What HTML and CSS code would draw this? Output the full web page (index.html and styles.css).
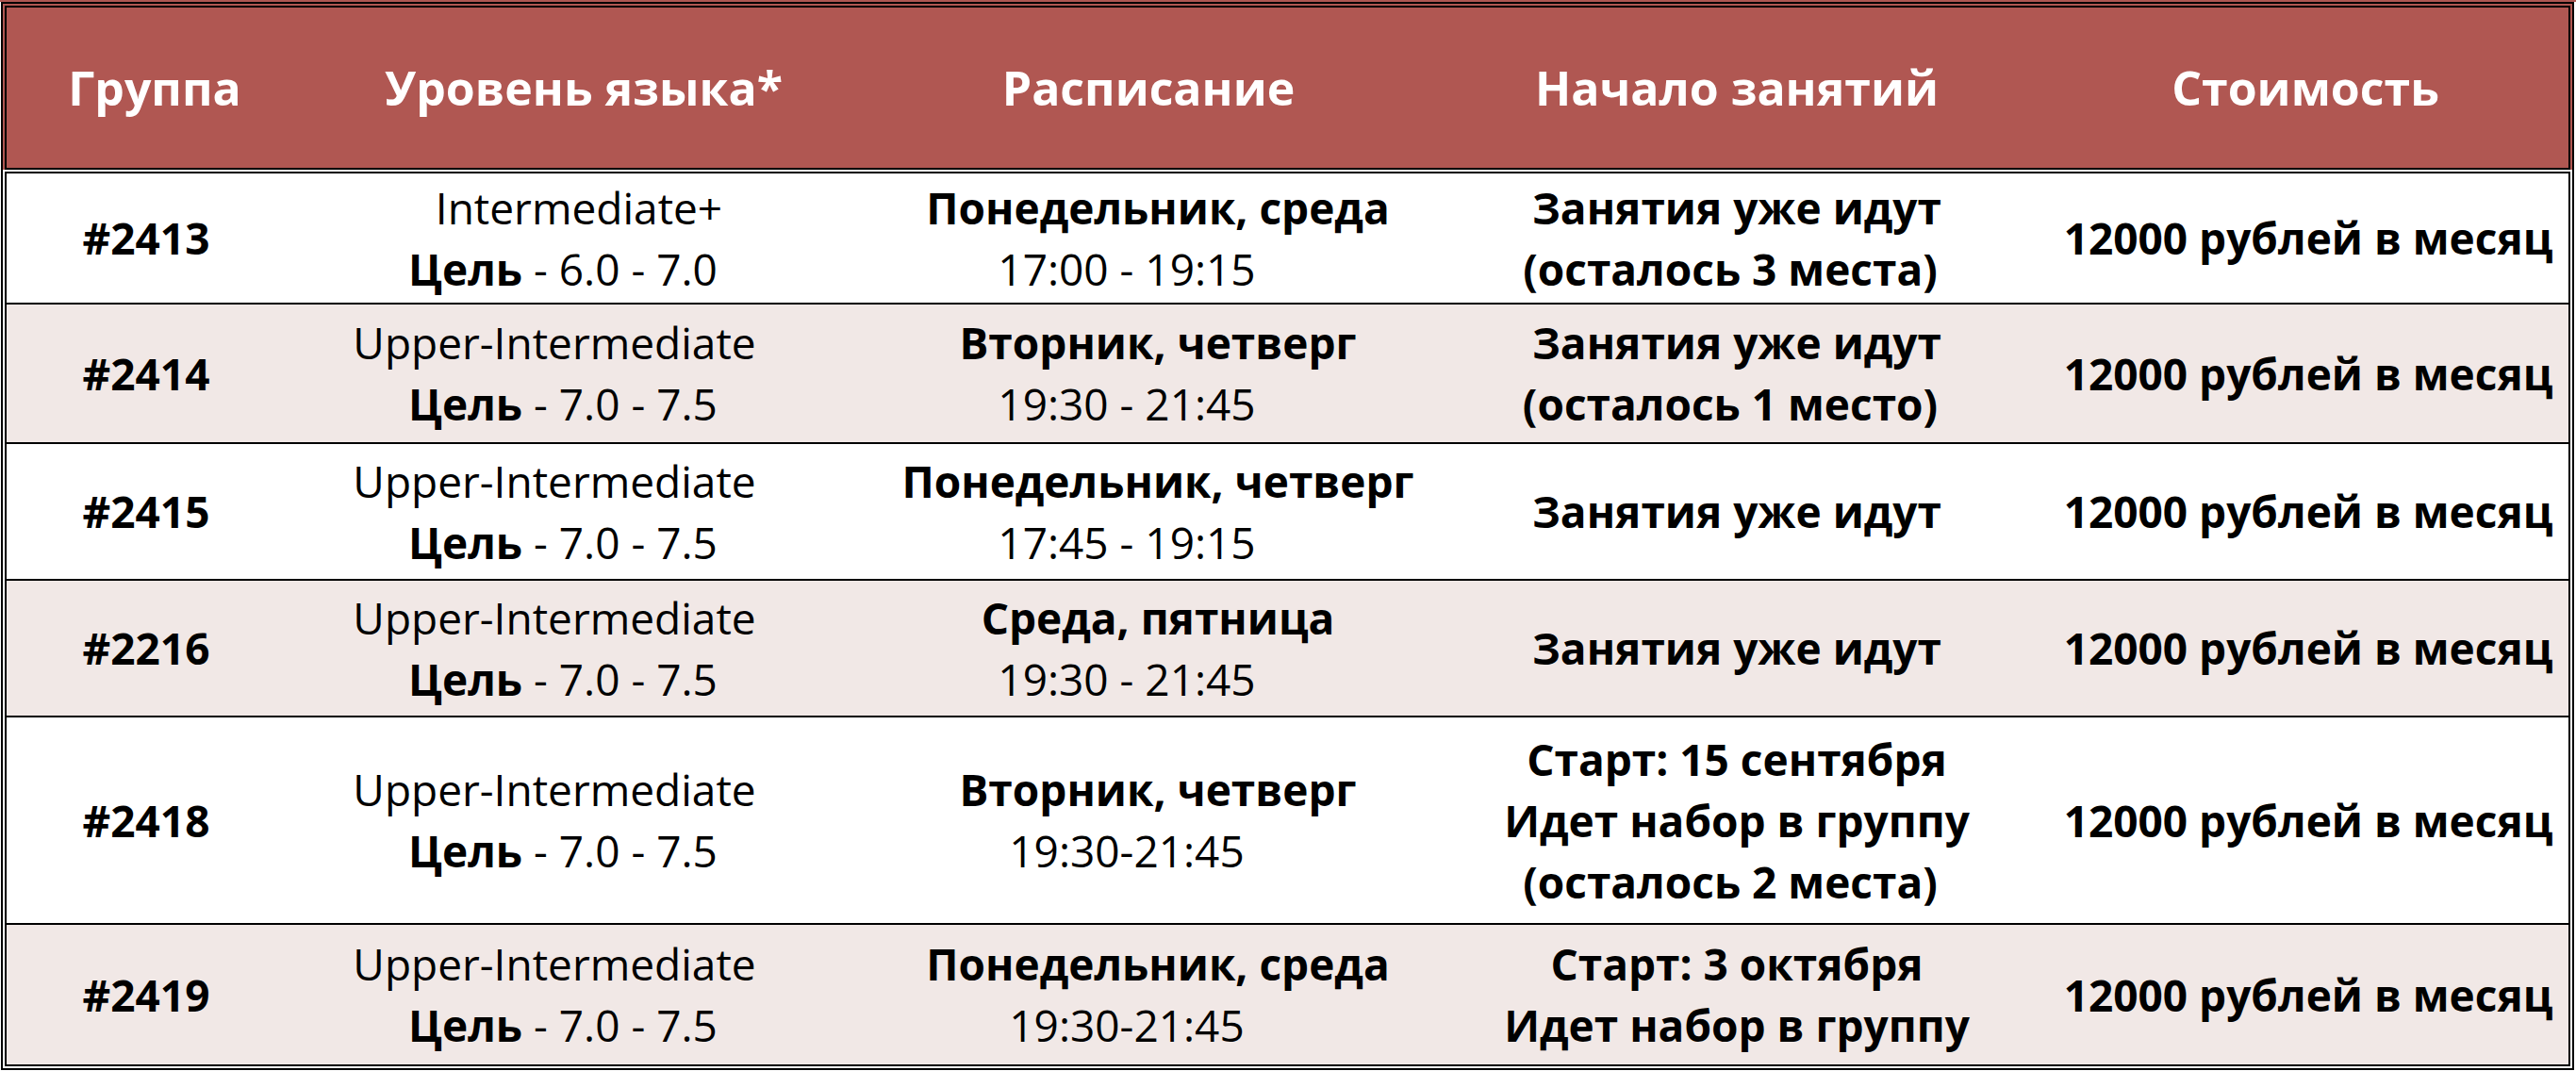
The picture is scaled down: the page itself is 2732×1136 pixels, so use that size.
FILE: index.html
```html
<!DOCTYPE html>
<html lang="ru">
<head>
<meta charset="utf-8">
<title>Группы</title>
<link rel="stylesheet" href="styles.css">
</head>
<body>
<div class="frame">
  <div class="row head">
    <div class="cell c1"><span class="hpad1">Группа</span></div>
    <div class="cell c2"><span class="hpad2">Уровень языка*</span></div>
    <div class="cell c3">Расписание</div>
    <div class="cell c4">Начало занятий</div>
    <div class="cell c5 h5">Стоимость</div>
  </div>
  <div class="rows">
    <div class="row white r1">
      <div class="cell c1 b">#2413</div>
      <div class="cell c2"><span class="lvl-plus">Intermediate+</span><span><b>Цель</b> - 6.0 - 7.0</span></div>
      <div class="cell c3"><span class="day">Понедельник, среда</span><span class="time">17:00 - 19:15</span></div>
      <div class="cell c4 b"><span>Занятия уже идут</span><span class="left">(осталось 3 места)</span></div>
      <div class="cell c5 b">12000 рублей в месяц</div>
    </div>
    <div class="row pink r2">
      <div class="cell c1 b">#2414</div>
      <div class="cell c2"><span class="lvl">Upper-Intermediate</span><span><b>Цель</b> - 7.0 - 7.5</span></div>
      <div class="cell c3"><span class="day">Вторник, четверг</span><span class="time">19:30 - 21:45</span></div>
      <div class="cell c4 b"><span>Занятия уже идут</span><span class="left">(осталось 1 место)</span></div>
      <div class="cell c5 b">12000 рублей в месяц</div>
    </div>
    <div class="row white r3">
      <div class="cell c1 b">#2415</div>
      <div class="cell c2"><span class="lvl">Upper-Intermediate</span><span><b>Цель</b> - 7.0 - 7.5</span></div>
      <div class="cell c3"><span class="day">Понедельник, четверг</span><span class="time">17:45 - 19:15</span></div>
      <div class="cell c4 b"><span>Занятия уже идут</span></div>
      <div class="cell c5 b">12000 рублей в месяц</div>
    </div>
    <div class="row pink r4">
      <div class="cell c1 b">#2216</div>
      <div class="cell c2"><span class="lvl">Upper-Intermediate</span><span><b>Цель</b> - 7.0 - 7.5</span></div>
      <div class="cell c3"><span class="day">Среда, пятница</span><span class="time">19:30 - 21:45</span></div>
      <div class="cell c4 b"><span>Занятия уже идут</span></div>
      <div class="cell c5 b">12000 рублей в месяц</div>
    </div>
    <div class="row white r5">
      <div class="cell c1 b">#2418</div>
      <div class="cell c2"><span class="lvl">Upper-Intermediate</span><span><b>Цель</b> - 7.0 - 7.5</span></div>
      <div class="cell c3"><span class="day">Вторник, четверг</span><span class="time">19:30-21:45</span></div>
      <div class="cell c4 b"><span>Старт: 15 сентября</span><span>Идет набор в группу</span><span class="left">(осталось 2 места)</span></div>
      <div class="cell c5 b">12000 рублей в месяц</div>
    </div>
    <div class="row pink r6">
      <div class="cell c1 b">#2419</div>
      <div class="cell c2"><span class="lvl">Upper-Intermediate</span><span><b>Цель</b> - 7.0 - 7.5</span></div>
      <div class="cell c3"><span class="day">Понедельник, среда</span><span class="time">19:30-21:45</span></div>
      <div class="cell c4 b"><span>Старт: 3 октября</span><span>Идет набор в группу</span></div>
      <div class="cell c5 b">12000 рублей в месяц</div>
    </div>
  </div>
</div>
</body>
</html>
```

FILE: styles.css
```css
* { box-sizing: border-box; }

html, body {
  margin: 0;
  padding: 0;
  background: #ffffff;
}

body {
  border-top: 2px solid #b05752;
  width: 2732px;
  height: 1136px;
  overflow: hidden;
  font-family: "Open Sans", "Noto Sans", "DejaVu Sans", sans-serif;
  color: #000;
}

.frame {
  margin: 0 2px 1px 1px;
  border: 2px solid #000;
  padding: 2px;
  background: linear-gradient(to bottom, #b05752 0, #b05752 176px, #ffffff 176px);
}

.row {
  display: grid;
  grid-template-columns: 296px 588px 654px 594px 1fr;
  border-left: 2px solid #000;
  border-right: 2px solid #000;
  border-top: 2px solid #000;
}

.head {
  height: 174px;
  border-bottom: 2px solid #000;
  margin-bottom: 2px;
  background: #b05752;
  color: #ffffff;
  font-size: 50px;
  font-weight: 700;
}

.rows .row:last-child {
  border-bottom: 2px solid #000;
}

.white { background: #ffffff; }
.pink { background: #f1e8e6; }

.r1 { height: 139px; }
.r2 { height: 148px; }
.r3 { height: 145px; }
.r4 { height: 145px; }
.r5 { height: 220px; }
.r6 { height: 152px; }

.rows .row {
  font-size: 46px;
  line-height: 65px;
}

.cell {
  display: flex;
  flex-direction: column;
  align-items: center;
  justify-content: center;
  text-align: center;
  white-space: nowrap;
}

.b { font-weight: 700; }
b { font-weight: 700; }

.c5 { padding-left: 33px; }
.h5 { padding-left: 27px; }

.hpad1 { padding-left: 18px; }
.hpad2 { padding-left: 44px; }

.lvl { padding-right: 18px; }
.lvl-plus { padding-left: 34px; }

.day { padding-left: 20px; font-weight: 700; }
.time { padding-right: 46px; }

.left { padding-right: 14px; }
```
